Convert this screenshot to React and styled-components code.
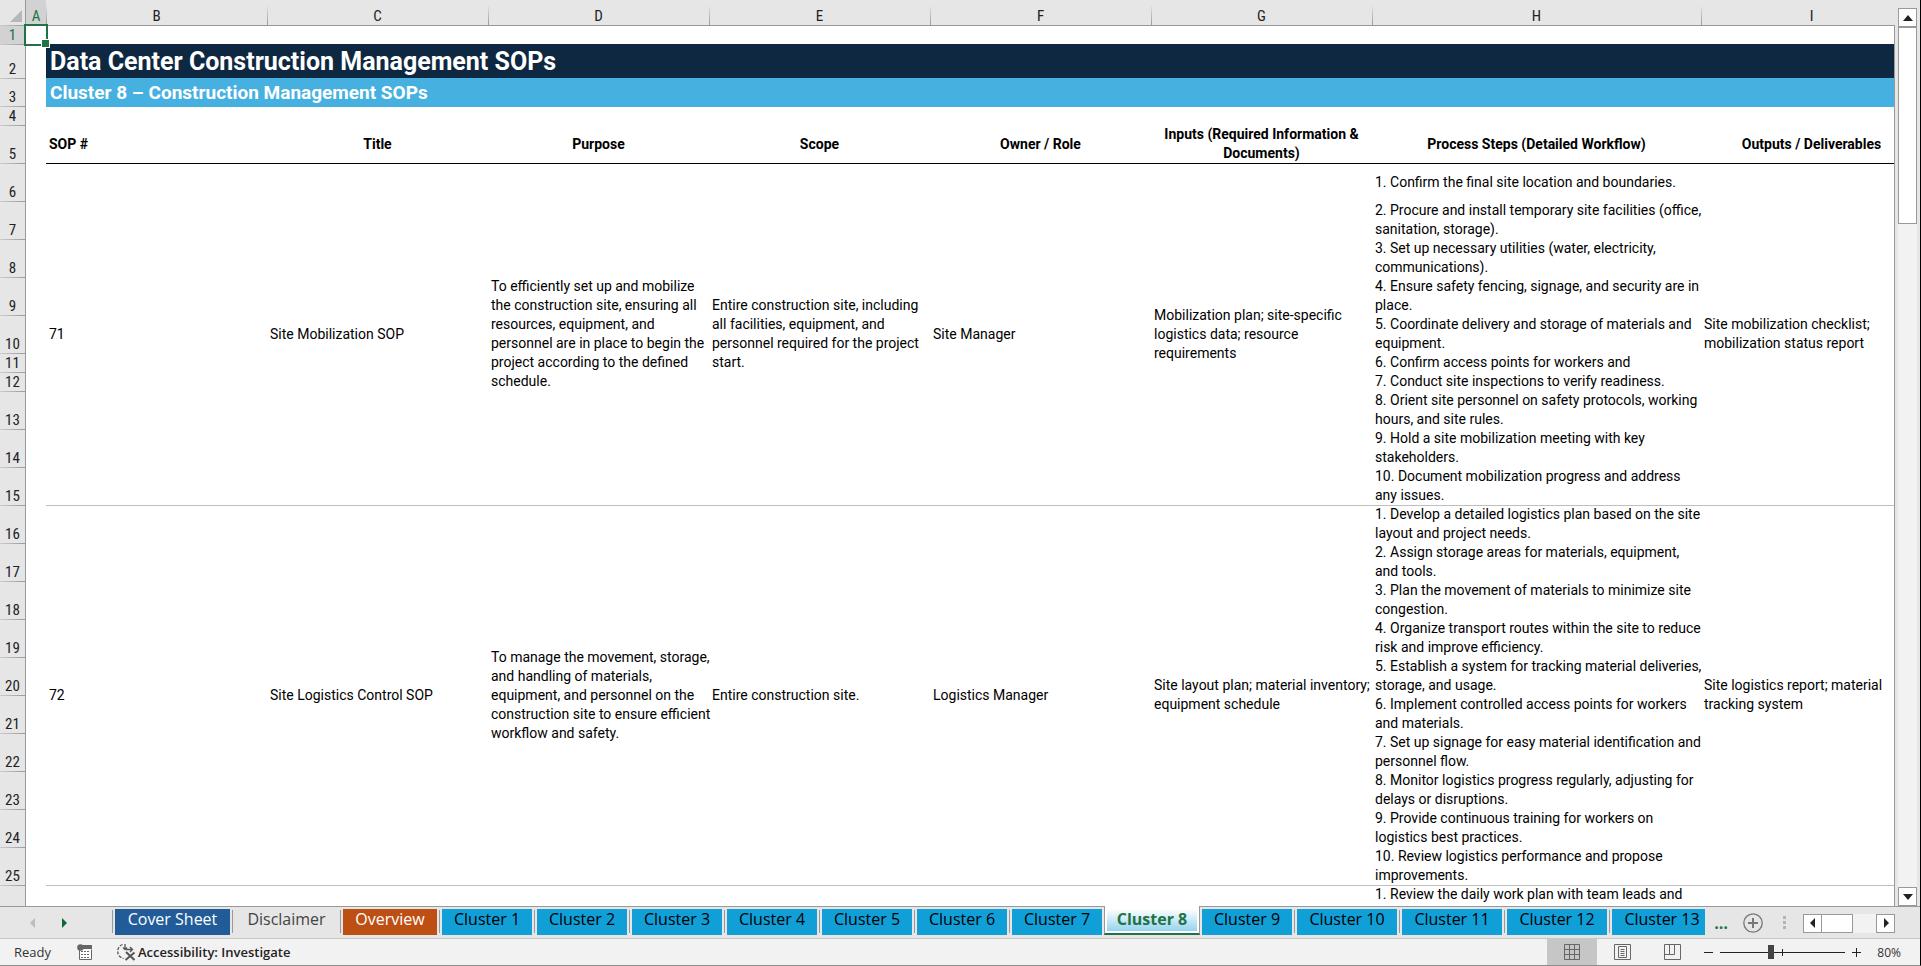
import { Fragment } from "react"
import styled, { createGlobalStyle, css } from "styled-components"

const GlobalStyle = createGlobalStyle`
	* {
		box-sizing: border-box;
	}
	body {
		margin: 0;
		overflow: hidden;
		background: #e6e6e6;
	}
	button {
		margin: 0;
		padding: 0;
		border: none;
		background: none;
		font-family: inherit;
		color: inherit;
		cursor: pointer;
	}
`

const Window = styled.div`
	height: 100vh;
	display: flex;
	flex-direction: column;
	background: #e6e6e6;
	border-right: 1px solid #000;
	border-bottom: 1px solid #8c8c8c;
	font-family: Roboto, "Liberation Sans", sans-serif;
	color: #000;
`

/* ---------- grid ---------- */

const Workspace = styled.main`
	flex: 1;
	min-height: 0;
	display: flex;
`
const Viewport = styled.div`
	flex: 1;
	min-width: 0;
	overflow: hidden;
	position: relative;

	&::after {
		content: "";
		position: absolute;
		top: 25px;
		right: 0;
		bottom: 0;
		width: 1px;
		background: #999;
	}
`
const Grid = styled.table`
	table-layout: fixed;
	width: 1922px;
	border-collapse: separate;
	border-spacing: 0;
	background: #fff;
	font-size: 14px;
	line-height: 19px;
`
const Col = styled.col`
	width: ${(p) => p.$width}px;
`
const Row = styled.tr`
	height: ${(p) => p.$height}px;
`
const Corner = styled.td`
	padding: 0 3px 3px 0;
	vertical-align: bottom;
	background: #e6e6e6;
	border-right: 1px solid #999;

	svg {
		display: block;
		margin-left: auto;
	}
`
const ColumnHead = styled.th`
	height: 25px;
	padding: 7px 0 0;
	font-family: "Roboto Condensed", Roboto, sans-serif;
	font-size: 15px;
	font-weight: 400;
	line-height: 18px;
	color: ${(p) => (p.$active ? "#217346" : "#222")};
	background: linear-gradient(#e0e0e0, #999) ${(p) => (p.$first ? "-1px" : "0")} 6px / 1px 19px no-repeat
		${(p) => (p.$active ? "#d2d2d2" : "#e6e6e6")};
`
const RowHead = styled.th`
	padding: 0;
	vertical-align: bottom;
	font-family: "Roboto Condensed", Roboto, sans-serif;
	font-size: 15px;
	font-weight: 400;
	line-height: 18px;
	border-right: 1px solid #999;
	color: ${(p) => (p.$active ? "#217346" : "#222")};
	background: linear-gradient(90deg, #ccc, #999) 0 0 / 100% 1px no-repeat
		${(p) => (p.$active ? "#d2d2d2" : "#e6e6e6")};
`
const Cell = styled.td`
	padding: 0 0 0 3px;
	vertical-align: ${(p) => (p.$alignTop ? "top" : "middle")};
	white-space: pre;
	${(p) => p.$rule && css`box-shadow: inset 0 1px ${p.$rule};`}
`
const FirstRowCell = styled.td`
	padding: 0;
	border-top: 1px solid #999;
`
const SelectedCell = styled(FirstRowCell)`
	position: relative;
`
const Selection = styled.div`
	position: absolute;
	inset: -2px;
	border: 2px solid #217346;

	&::after {
		content: "";
		position: absolute;
		right: -4px;
		bottom: -4px;
		width: 7px;
		height: 7px;
		background: #217346;
		border: 1px solid #fff;
	}
`
const Banner = styled.td`
	padding: 0 4px;
	color: #fff;
	font-weight: 700;
	line-height: 26px;

	${(p) =>
		p.$main
			? css`
					padding-top: 2px;
					font-size: 25px;
					background: #0f2841;
				`
			: css`
					padding-top: 2px;
					font-size: 19px;
					background: #46b1e1;
					box-shadow: 0 1px #46b1e1;
				`}
`
const Heading = styled.th`
	padding: 0 3px;
	font-weight: 700;
	text-align: ${(p) => (p.$left ? "left" : "center")};
`

/* ---------- scroll bars ---------- */

const ScrollColumn = styled.div`
	display: flex;
	flex-direction: column;
	width: 25px;
	padding: 8px 3px 0;
`
const ScrollButton = styled.button`
	display: flex;
	align-items: center;
	justify-content: center;
	flex: none;
	width: 19px;
	height: 19px;
	background: #fff;
	border: 1px solid #999;
`
const Track = styled.div`
	flex: 1;
	background: #f2f2f2;
`
const VerticalThumb = styled.div`
	height: 197px;
	background: #fff;
	border: 1px solid #999;
`
const HorizontalScroll = styled.div`
	display: flex;
	width: 92px;
	margin-left: 17px;
`
const HorizontalThumb = styled.div`
	width: 31px;
	height: 19px;
	background: #fff;
	border: 1px solid #999;
	border-left: none;
`

/* ---------- sheet tabs ---------- */

const TabBar = styled.nav`
	display: flex;
	align-items: flex-start;
	height: 33px;
	padding-right: 25px;
	border-top: 1px solid #999;
	border-bottom: 1px solid #c6c6c6;
	font-family: "Open Sans", "Noto Sans", sans-serif;
	font-size: 16px;
`
const TabArrows = styled.div`
	display: flex;
	gap: 17px;
	width: 112px;
	padding: 9px 0 0 26px;

	button {
		display: flex;
	}
`
const TabList = styled.div`
	flex: 1;
	min-width: 0;
	display: flex;
	overflow: hidden;
	margin-top: -1px;
`
const TabSlot = styled.div`
	flex: none;
	height: 29px;
	padding: 2px 2px 0;
	border-left: 1px solid transparent;
	border-top: 1px solid #999;
	background: linear-gradient(#999, #999) 0 4px / 1px 23px no-repeat border-box;

	${(p) =>
		p.$current &&
		css`
			padding: 3px 2px 2px;
			margin-right: -1px;
			background: #fff;
			border-top: none;
			border-left: 1px solid #999;
			border-right: 1px solid #999;
			border-bottom: 2px solid #217346;
		`}
	${(p) => p.$afterCurrent && css`background: none;`}
`
const tones = {
	navy: { bg: "#215c98", fg: "#fff" },
	plain: { bg: "transparent", fg: "#444" },
	orange: { bg: "#be4f14", fg: "#fff" },
	blue: { bg: "#119fd8", fg: "#000" },
}
const Tab = styled.button`
	display: block;
	width: ${(p) => p.$width}px;
	height: 26px;
	padding-bottom: 6px;
	font-size: 16px;
	line-height: 20px;
	color: ${(p) => tones[p.$tone].fg};
	background: ${(p) => tones[p.$tone].bg};

	${(p) =>
		p.$current &&
		css`
			height: 22px;
			padding-bottom: 2px;
			font-weight: 700;
			color: #217346;
			background: linear-gradient(#fff, #94d3ef);
		`}
`
const MoreTabs = styled.button`
	width: 38px;
	height: 29px;
	padding-right: 6px;
	color: #217346;
	font-size: 16px;
	font-weight: 700;
	line-height: 24px;
`
const AddTab = styled.button`
	display: flex;
	margin-right: 20px;
`
const TabTools = styled.div`
	display: flex;
	align-items: center;
	height: 32px;
`

/* ---------- status bar ---------- */

const StatusBar = styled.footer`
	display: flex;
	align-items: center;
	height: 26px;
	padding: 0 19px 0 14px;
	background: #f2f2f2;
	font-family: "Open Sans", "Noto Sans", sans-serif;
	font-size: 13px;
	line-height: 16px;
	color: #333;
`
const Mode = styled.span`
	width: 63px;
`
const MacroButton = styled.button`
	display: flex;
	margin-right: 23px;
`
const Accessibility = styled.button`
	display: flex;
	align-items: center;
	gap: 2px;
	font-size: 13px;
	font-weight: 600;
	color: #222;
`
const ViewButtons = styled.div`
	display: flex;
	height: 26px;
	margin-left: auto;
`
const ViewButton = styled.button`
	display: flex;
	align-items: center;
	justify-content: center;
	width: 50px;
	background: ${(p) => (p.$current ? "#c6c6c6" : "transparent")};
`
const ZoomButton = styled.button`
	display: flex;
	margin: 0 6px;
`
const ZoomSlider = styled.input`
	appearance: none;
	width: 125px;
	height: 16px;
	margin: 0;
	background:
		linear-gradient(#222, #222) center / 1px 7px no-repeat,
		linear-gradient(#222, #222) center / 100% 1px no-repeat;

	&::-webkit-slider-thumb {
		appearance: none;
		width: 6px;
		height: 14px;
		background: #444;
	}
`
const ZoomLevel = styled.button`
	width: 33px;
	font-size: 12px;
	text-align: right;
`

const Arrow = ({ dir, color = "#222" }) => {
	const points = {
		up: "2,10 12,10 7,4",
		down: "2,4 12,4 7,10",
		left: "9,2 9,12 4,7",
		right: "5,2 5,12 10,7",
	}
	return (
		<svg width="14" height="14" viewBox="0 0 14 14" aria-hidden="true">
			<polygon points={points[dir]} fill={color} />
		</svg>
	)
}

const AddIcon = () => (
	<svg width="20" height="20" viewBox="0 0 20 20" fill="none" stroke="#777">
		<circle cx="10" cy="10" r="9.2" strokeWidth="1.3" />
		<path d="M10 5v10M5 10h10" strokeWidth="2" />
	</svg>
)

const GripIcon = () => (
	<svg width="3" height="14" viewBox="0 0 3 14" fill="#b4b4b4" aria-hidden="true">
		<path d="M0 0h3v3H0zM0 5h3v3H0zM0 10h3v3H0z" />
	</svg>
)

const MacroIcon = () => (
	<svg width="16" height="16" viewBox="0 0 16 16">
		<path d="M2.5 5.5v10h12v-10" fill="#fff" stroke="#666" />
		<path d="M6 1h9v4H6z" fill="#666" />
		<circle cx="3.5" cy="3.5" r="3.3" fill="#666" />
		<path d="M4 7.5h9M4 10.5h9M4 13.5h9" stroke="#666" strokeDasharray="2 1" />
	</svg>
)

const AccessibilityIcon = () => (
	<svg width="20" height="18" viewBox="0 0 20 18" fill="none" stroke="#555">
		<path d="M6.5 1.5a7.3 7.3 0 0 0 1 14" strokeWidth="1.3" strokeDasharray="3 1.4" />
		<path d="M9 1v5.5M7 4.5l2 2 2-2M10 6.5h6M14 4l2.500 2.500L14 9" strokeWidth="1.3" />
		<path d="M10 9l8.500 8M18.500 9.500L9.500 17" strokeWidth="2" />
	</svg>
)

const NormalIcon = () => (
	<svg width="16" height="16" viewBox="0 0 16 16" fill="none" stroke="#666">
		<path d="M.5.5h15v15H.5zM5.5.5v15M10.5.5v15M.5 5.5h15M.5 10.5h15" />
	</svg>
)

const PageLayoutIcon = () => (
	<svg width="17" height="16" viewBox="0 0 17 16" fill="none" stroke="#666">
		<path d="M.5.5h16v15H.5zM4.5 2.5h8v11h-8zM6.500 5.5h4M6.5 7.5h4M6.5 9.5h4M6.5 11.5h4" />
	</svg>
)

const PageBreakIcon = () => (
	<svg width="17" height="16" viewBox="0 0 17 16" fill="none" stroke="#666">
		<path d="M.5.5h16v15H.5zM.5 10.5h10V.5M5.5.5v10" />
	</svg>
)

const columns = ["A", "B", "C", "D", "E", "F", "G", "H", "I"]
const widths = [26, 20, 221, 221, 221, 221, 221, 221, 329, 221]

const headings = [
	"SOP #",
	"Title",
	"Purpose",
	"Scope",
	"Owner / Role",
	"Inputs (Required Information & Documents)",
	"Process Steps (Detailed Workflow)",
	"Outputs / Deliverables",
]

const sops = [
	{
		firstRow: 6,
		rule: "#000",
		before: [
			"71",
			"Site Mobilization SOP",
			"To efficiently set up and mobilize\nthe construction site, ensuring all\nresources, equipment, and\npersonnel are in place to begin the\nproject according to the defined\nschedule.",
			"Entire construction site, including\nall facilities, equipment, and\npersonnel required for the project\nstart.",
			"Site Manager",
			"Mobilization plan; site-specific\nlogistics data; resource\nrequirements",
		],
		outputs: "Site mobilization checklist;\nmobilization status report",
		steps: [
			["1. Confirm the final site location and boundaries.", 38],
			["2. Procure and install temporary site facilities (office,\nsanitation, storage).", 38],
			["3. Set up necessary utilities (water, electricity,\ncommunications).", 38],
			["4. Ensure safety fencing, signage, and security are in\nplace.", 38],
			["5. Coordinate delivery and storage of materials and\nequipment.", 38],
			["6. Confirm access points for workers and", 19],
			["7. Conduct site inspections to verify readiness.", 19],
			["8. Orient site personnel on safety protocols, working\nhours, and site rules.", 38],
			["9. Hold a site mobilization meeting with key\nstakeholders.", 38],
			["10. Document mobilization progress and address\nany issues.", 38],
		],
	},
	{
		firstRow: 16,
		rule: "#bfbfbf",
		before: [
			"72",
			"Site Logistics Control SOP",
			"To manage the movement, storage,\nand handling of materials,\nequipment, and personnel on the\nconstruction site to ensure efficient\nworkflow and safety.",
			"Entire construction site.",
			"Logistics Manager",
			"Site layout plan; material inventory;\nequipment schedule",
		],
		outputs: "Site logistics report; material\ntracking system",
		steps: [
			["1. Develop a detailed logistics plan based on the site\nlayout and project needs.", 38],
			["2. Assign storage areas for materials, equipment,\nand tools.", 38],
			["3. Plan the movement of materials to minimize site\ncongestion.", 38],
			["4. Organize transport routes within the site to reduce\nrisk and improve efficiency.", 38],
			["5. Establish a system for tracking material deliveries,\nstorage, and usage.", 38],
			["6. Implement controlled access points for workers\nand materials.", 38],
			["7. Set up signage for easy material identification and\npersonnel flow.", 38],
			["8. Monitor logistics progress regularly, adjusting for\ndelays or disruptions.", 38],
			["9. Provide continuous training for workers on\nlogistics best practices.", 38],
			["10. Review logistics performance and propose\nimprovements.", 38],
		],
	},
]

const tabs = [
	{ name: "Cover Sheet", tone: "navy", width: 115 },
	{ name: "Disclaimer", tone: "plain", width: 103 },
	{ name: "Overview", tone: "orange", width: 94 },
	...[1, 2, 3, 4, 5, 6, 7, 8, 9].map((n) => ({ name: `Cluster ${n}`, tone: "blue", width: 90 })),
	...[10, 11, 12, 13].map((n) => ({ name: `Cluster ${n}`, tone: "blue", width: 100 })),
]
const current = tabs.findIndex((t) => t.name === "Cluster 8")

const SopRows = ({ sop }) =>
	sop.steps.map(([step, height], i) => {
		const first = i === 0
		return (
			<Row key={step} $height={height}>
				<RowHead scope="row">{sop.firstRow + i}</RowHead>
				<Cell />
				{first &&
					sop.before.map((text) => (
						<Cell key={text} rowSpan={sop.steps.length} $rule={sop.rule}>
							{text}
						</Cell>
					))}
				<Cell $rule={first && sop.rule}>{step}</Cell>
				{first && (
					<Cell rowSpan={sop.steps.length} $rule={sop.rule}>
						{sop.outputs}
					</Cell>
				)}
			</Row>
		)
	})

const Sheet = () => (
	<Grid>
		<colgroup>
			{widths.map((w, i) => (
				<Col key={i} $width={w} />
			))}
		</colgroup>
		<thead>
			<Row $height={25}>
				<Corner>
					<svg width="12" height="12" viewBox="0 0 12 12" aria-hidden="true">
						<polygon points="12,0 12,12 0,12" fill="#b7b7b7" />
					</svg>
				</Corner>
				{columns.map((c, i) => (
					<ColumnHead key={c} scope="col" $active={i === 0} $first={i === 0}>
						{c}
					</ColumnHead>
				))}
			</Row>
		</thead>
		<tbody>
			<Row $height={19}>
				<RowHead scope="row" $active>1</RowHead>
				<SelectedCell>
					<Selection />
				</SelectedCell>
				<FirstRowCell colSpan={8} />
			</Row>
			<Row $height={34}>
				<RowHead scope="row">2</RowHead>
				<Cell />
				<Banner colSpan={8} $main>Data Center Construction Management SOPs</Banner>
			</Row>
			<Row $height={28}>
				<RowHead scope="row">3</RowHead>
				<Cell />
				<Banner colSpan={8}>Cluster 8 – Construction Management SOPs</Banner>
			</Row>
			<Row $height={19}>
				<RowHead scope="row">4</RowHead>
				<Cell colSpan={9} />
			</Row>
			<Row $height={38}>
				<RowHead scope="row">5</RowHead>
				<Cell />
				{headings.map((h, i) => (
					<Heading key={h} $left={i === 0}>
						{h}
					</Heading>
				))}
			</Row>
			{sops.map((sop) => (
				<Fragment key={sop.firstRow}>
					<SopRows sop={sop} />
				</Fragment>
			))}
			<Row $height={38}>
				<RowHead scope="row" />
				<Cell />
				<Cell colSpan={6} $rule="#bfbfbf" />
				<Cell $rule="#bfbfbf" $alignTop>1. Review the daily work plan with team leads and</Cell>
				<Cell $rule="#bfbfbf" />
			</Row>
		</tbody>
	</Grid>
)

const App = () => {
	return (
		<Window>
			<GlobalStyle />
			<Workspace>
				<Viewport>
					<Sheet />
				</Viewport>
				<ScrollColumn>
					<ScrollButton aria-label="Scroll up">
						<Arrow dir="up" />
					</ScrollButton>
					<VerticalThumb />
					<Track />
					<ScrollButton aria-label="Scroll down">
						<Arrow dir="down" />
					</ScrollButton>
				</ScrollColumn>
			</Workspace>
			<TabBar>
				<TabArrows>
					<button aria-label="Previous sheet">
						<Arrow dir="left" color="#bcbcbc" />
					</button>
					<button aria-label="Next sheet">
						<Arrow dir="right" color="#0b6a37" />
					</button>
				</TabArrows>
				<TabList>
					{tabs.map((t, i) => (
						<TabSlot key={t.name} $current={i === current} $afterCurrent={i === current + 1}>
							<Tab $tone={t.tone} $width={t.width} $current={i === current}>
								{t.name}
							</Tab>
						</TabSlot>
					))}
				</TabList>
				<TabTools>
					<MoreTabs aria-label="More sheets">…</MoreTabs>
					<AddTab aria-label="New sheet">
						<AddIcon />
					</AddTab>
					<GripIcon />
					<HorizontalScroll>
						<ScrollButton aria-label="Scroll left">
							<Arrow dir="left" />
						</ScrollButton>
						<HorizontalThumb />
						<Track />
						<ScrollButton aria-label="Scroll right">
							<Arrow dir="right" />
						</ScrollButton>
					</HorizontalScroll>
				</TabTools>
			</TabBar>
			<StatusBar>
				<Mode>Ready</Mode>
				<MacroButton aria-label="Record macro">
					<MacroIcon />
				</MacroButton>
				<Accessibility>
					<AccessibilityIcon />
					Accessibility: Investigate
				</Accessibility>
				<ViewButtons>
					<ViewButton $current aria-label="Normal">
						<NormalIcon />
					</ViewButton>
					<ViewButton aria-label="Page layout">
						<PageLayoutIcon />
					</ViewButton>
					<ViewButton aria-label="Page break preview">
						<PageBreakIcon />
					</ViewButton>
				</ViewButtons>
				<ZoomButton aria-label="Zoom out">
					<svg width="11" height="11" viewBox="0 0 11 11" stroke="#222">
						<path d="M1 5.5h9" />
					</svg>
				</ZoomButton>
				<ZoomSlider type="range" min="0" max="200" defaultValue="80" aria-label="Zoom" />
				<ZoomButton aria-label="Zoom in">
					<svg width="11" height="11" viewBox="0 0 11 11" stroke="#222">
						<path d="M1 5.5h9M5.5 1v9" />
					</svg>
				</ZoomButton>
				<ZoomLevel>80%</ZoomLevel>
			</StatusBar>
		</Window>
	)
}

export default App
